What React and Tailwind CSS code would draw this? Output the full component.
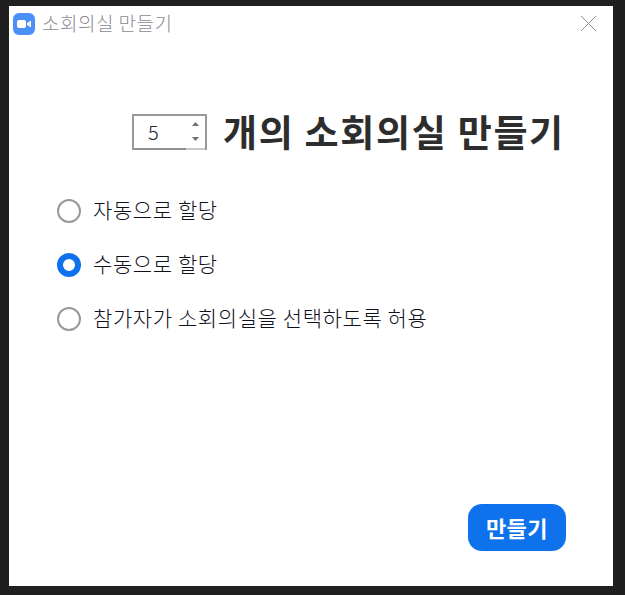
import React, { useState } from "react";

const options = ["자동으로 할당", "수동으로 할당", "참가자가 소회의실을 선택하도록 허용"];

const App = () => {
  const [selected, setSelected] = useState(1);

  return (
    <div className="w-[625px] h-[595px] bg-[#1f1f1f] pl-[9px] pr-3 pt-[6px] pb-[9px] font-['Noto_Sans_CJK_KR','Noto_Sans',sans-serif]">
      <div className="w-[604px] h-[580px] bg-white flex flex-col">
        {/* Title bar */}
        <div className="h-[36px] flex items-center pl-[4px] pr-[16px] shrink-0">
          <svg width="22" height="22" viewBox="0 0 22 22" className="shrink-0">
            <rect width="22" height="22" rx="6" fill="#4a90f7" />
            <rect x="4" y="7" width="9" height="8" rx="2" fill="#fff" />
            <path d="M14 10l4-2.6v7.2L14 12z" fill="#fff" />
          </svg>
          <span className="ml-[7px] mb-[3px] text-[19px] tracking-[0.5px] font-light leading-none text-[#8a8a92]">소회의실 만들기</span>
          <svg width="18" height="18" viewBox="0 0 18 18" className="ml-auto mb-[2px]">
            <path d="M2 2l15 15M17 2L2 17" stroke="#8e8e8e" strokeWidth="1" fill="none" />
          </svg>
        </div>

        {/* Heading */}
        <div className="flex items-center mt-[71px] ml-[123px]">
          <div className="w-[75px] h-[36px] border-2 border-b-0 border-[#999] flex flex-col">
            <div className="flex-1 flex items-center justify-between pl-[14px] pr-[6px]">
              <span className="text-[20px] font-light leading-none text-[#232333]">5</span>
              <div className="flex flex-col gap-[11px]">
                <svg width="7" height="4" viewBox="0 0 7 4"><path d="M3.5 0L7 4H0z" fill="#6e6e6e" /></svg>
                <svg width="7" height="4" viewBox="0 0 7 4"><path d="M3.5 4L0 0h7z" fill="#6e6e6e" /></svg>
              </div>
            </div>
            <div className="flex h-[2px]">
              <div className="w-[52px] bg-[#8f8f8f]" />
              <div className="flex-1 bg-[#c8c8c8]" />
            </div>
          </div>
          <h1 className="ml-[16px] text-[37px] tracking-[1.7px] leading-none font-bold text-[#2d2d2d]">개의 소회의실 만들기</h1>
        </div>

        {/* Options */}
        <div className="mt-[49px] ml-[48px] flex flex-col gap-[30px]">
          {options.map((label, i) => (
            <label key={label} className="flex items-center h-[24px] cursor-pointer" onClick={() => setSelected(i)}>
              <span
                className={
                  i === selected
                    ? "w-[24px] h-[24px] rounded-full border-[6px] border-[#0e72ed] bg-white"
                    : "w-[24px] h-[24px] rounded-full border-2 border-[#999] bg-white"
                }
              />
              <span className="ml-[12px] mb-[3px] text-[21px] tracking-[0.6px] font-light leading-none text-[#10101c]">{label}</span>
            </label>
          ))}
        </div>

        {/* Footer */}
        <div className="mt-auto flex justify-end pr-[47px] pb-[35px]">
          <button className="w-[98px] h-[47px] rounded-[14px] bg-[#0e72ed] text-white text-[22px] tracking-[0.5px] font-semibold leading-none pb-[2px]">
            만들기
          </button>
        </div>
      </div>
    </div>
  );
};

export default App;
